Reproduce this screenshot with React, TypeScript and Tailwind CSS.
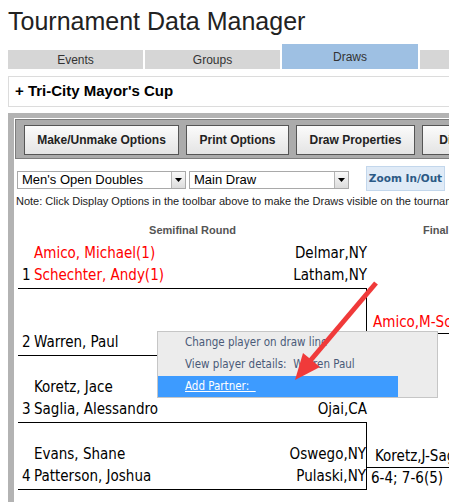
import React from "react";

const ENTRIES = [
  { h: "h-[49px]", top: { name: "Amico, Michael(1)", city: "Delmar,NY", red: true }, bottom: { n: "1", name: "Schechter, Andy(1)", city: "Latham,NY", red: true }, right: false },
  { h: "h-[67px]", top: null, bottom: { n: "2", name: "Warren, Paul", city: "", red: false }, right: true },
  { h: "h-[67px]", top: { name: "Koretz, Jace", city: "", red: false }, bottom: { n: "3", name: "Saglia, Alessandro", city: "Ojai,CA", red: false }, right: false },
  { h: "h-[67px]", top: { name: "Evans, Shane", city: "Oswego,NY", red: false }, bottom: { n: "4", name: "Patterson, Joshua", city: "Pulaski,NY", red: false }, right: true },
];

function Line({ n, name, city, red }: { n: string; name: string; city: string; red: boolean }) {
  return (
    <div className="flex h-[22px] items-center leading-[22px]">
      <span className="w-[16px] pl-[4px] text-black">{n}</span>
      <span className={`flex-1 ${red ? "text-[#ff0000]" : "text-black"}`}>{name}</span>
      <span className="text-black">{city}</span>
    </div>
  );
}

function Select({ label, w }: { label: string; w: string }) {
  return (
    <div className={`mt-[5px] flex h-[18px] items-stretch border border-[#a9a9a9] bg-white ${w}`}>
      <span className="flex-1 pl-[4px] text-[13px] leading-[16px] text-black">{label}</span>
      <span className="flex w-[14px] items-center justify-center border-l border-[#b5b5b5] bg-gradient-to-b from-[#fafafa] to-[#dcdcdc]">
        <svg width="7" height="4" viewBox="0 0 7 4"><path d="M0 0h7L3.5 4z" fill="#000" /></svg>
      </span>
    </div>
  );
}

export default function App() {
  return (
    <div className="relative h-[502px] w-[449px] overflow-hidden bg-white font-['Liberation_Sans',Arial,sans-serif]">
      <h1 className="h-[44px] pl-[8px] pt-[5px] text-[25px] leading-[32px] text-[#222]">Tournament Data Manager</h1>

      <div className="ml-[8px] flex h-[25px] w-[700px] items-end gap-[2px] text-[12px] text-[#333]">
        <div className="flex h-[19px] w-[135px] items-center justify-center bg-[#d6d6d6]">Events</div>
        <div className="flex h-[19px] w-[135px] items-center justify-center bg-[#d6d6d6]">Groups</div>
        <div className="flex h-[25px] w-[136px] items-center justify-center bg-[#9ec0e3]">Draws</div>
        <div className="flex h-[19px] w-[135px] items-center justify-center bg-[#d6d6d6]"></div>
      </div>

      <div className="ml-[8px] mt-[7px] flex h-[31px] w-[700px] items-center border border-[#dcdcdc] pl-[6px] text-[15px] font-bold text-black">
        + Tri-City Mayor's Cup
      </div>

      <div className="ml-[8px] mt-[6px] h-[400px] w-[700px] border-l-[6px] border-t-[5px] border-[#b3b3b3] pl-[1px] pt-[1px]">
        <div className="flex h-[40px] items-start gap-[7px] border border-[#7d7d7d] bg-[#ababab] pl-[8px] pt-[5px]">
          {[
            ["Make/Unmake Options", "w-[155px]"],
            ["Print Options", "w-[103px]"],
            ["Draw Properties", "w-[119px]"],
            ["Display Options", "w-[126px]"],
          ].map(([t, w]) => (
            <button key={t} className={`h-[30px] ${w} border border-[#555] bg-gradient-to-b from-[#fbfbfb] to-[#e4e4e4] text-[12px] font-bold text-[#222]`}>
              {t}
            </button>
          ))}
        </div>

        <div className="mt-[7px] flex items-start pl-[2px]">
          <Select label="Men's Open Doubles" w="w-[169px]" />
          <div className="w-[3px]" />
          <Select label="Main Draw" w="w-[160px]" />
          <div className="ml-[17px] flex h-[25px] w-[79px] items-center justify-center border border-[#c3d7ec] bg-[#e0ebf7] font-['DejaVu_Sans',sans-serif] text-[10.5px] font-bold text-[#2c5a86]">
            Zoom In/Out
          </div>
        </div>

        <p className="mt-[3px] pl-[1px] text-[11px] leading-[14px] text-[#222]">
          Note: Click Display Options in the toolbar above to make the Draws visible on the tournament website.
        </p>

        <div className="mt-[12px] flex font-['DejaVu_Sans_Condensed','Liberation_Sans',sans-serif] text-[15px]">
          <div className="ml-[3px] w-[349px]">
            <div className="h-[20px] pt-[2px] text-center font-['Liberation_Sans',Arial,sans-serif] text-[11px] font-bold leading-[16px] text-[#555]">
              Semifinal Round
            </div>
            {ENTRIES.map((e, i) => (
              <div key={i} className={`flex ${e.h} flex-col justify-end border-b border-black pb-[2px] ${e.right ? "border-r" : ""}`}>
                {e.top && <Line n="" name={e.top.name} city={e.top.city} red={e.top.red} />}
                <Line {...e.bottom} />
              </div>
            ))}
          </div>
          <div className="flex-1">
            <div className="h-[20px] pl-[56px] pt-[2px] font-['Liberation_Sans',Arial,sans-serif] text-[11px] font-bold leading-[16px] text-[#555]">
              Final
            </div>
            <div className="mt-[72px] h-[22px] whitespace-nowrap border-b border-black pl-[6px] leading-[20px] text-[#ff0000]">
              Amico,M-Schechter,A
            </div>
            <div className="mt-[112px] h-[22px] whitespace-nowrap border-b border-black pl-[8px] leading-[20px] text-black">
              Koretz,J-Saglia,A
            </div>
            <div className="whitespace-nowrap pl-[4px] leading-[20px] text-black">6-4; 7-6(5)</div>
          </div>
        </div>
      </div>

      <div className="absolute left-[157px] top-[331px] h-[67px] w-[281px] border border-[#c6c6c6] bg-[#ececec] font-['DejaVu_Sans_Condensed','Liberation_Sans',sans-serif] text-[11.5px] text-[#4a5a78]">
        <div className="flex h-[22px] items-center pl-[27px]">Change player on draw line</div>
        <div className="flex h-[22px] items-center pl-[27px]">View player details:&nbsp; Warren Paul</div>
        <div className="flex h-[21px] w-[240px] items-center bg-[#3d9bff] pl-[27px] text-white underline">Add Partner:&nbsp;&nbsp;</div>
      </div>

      <svg className="pointer-events-none absolute left-0 top-0" width="449" height="502">
        <line x1="376" y1="283" x2="310" y2="361" stroke="#f03a3a" strokeWidth="5" />
        <polygon points="295,380 320,367 303,353" fill="#f03a3a" />
      </svg>
    </div>
  );
}
